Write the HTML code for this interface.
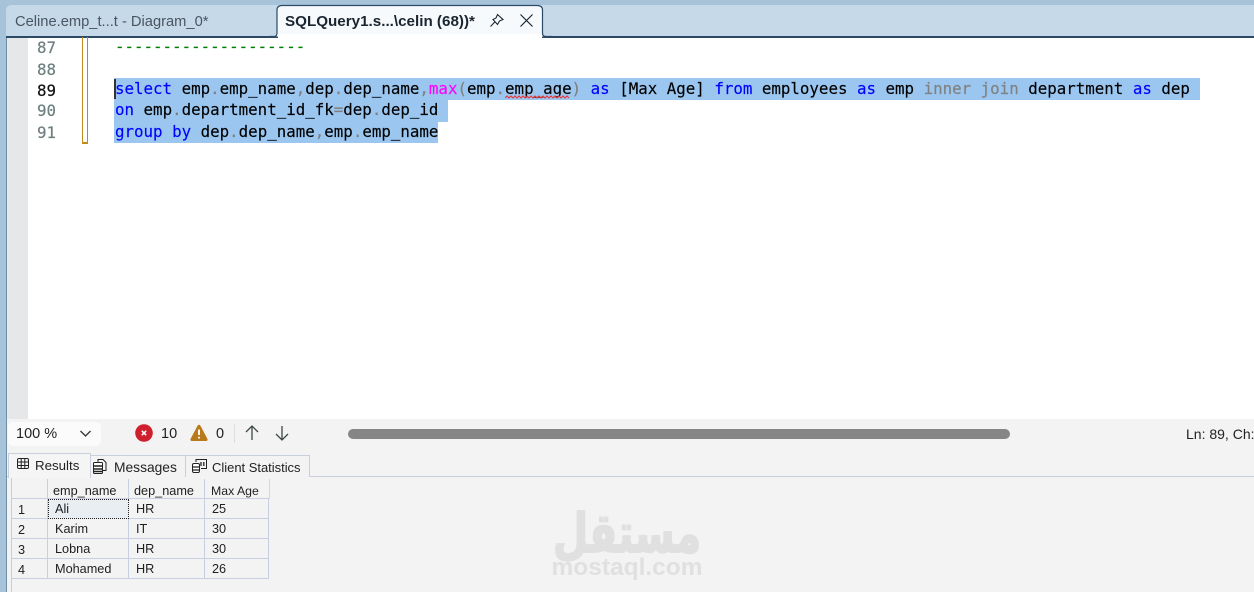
<!DOCTYPE html>
<html><head><meta charset="utf-8">
<style>
html,body{margin:0;padding:0}
body{width:1254px;height:592px;overflow:hidden;position:relative;background:#a6c3d9;font-family:"Liberation Sans",sans-serif}
.a{position:absolute;white-space:pre}
.code{font-family:"DejaVu Sans Mono","Liberation Mono",monospace;font-size:15.8px;line-height:21px;color:#000;height:21px;-webkit-text-stroke:.15px}
.ln{font-family:"DejaVu Sans Mono",monospace;font-size:15.8px;color:#6e7f80;line-height:21px;-webkit-text-stroke:.2px}
.k{color:#0000ff}.g{color:#808080}.m{color:#ff00ff}
.sel{background:#9ac6ef;position:absolute}
.cell{position:absolute;font-size:12.7px;color:#1f1f1f;line-height:20px;white-space:pre}
.v{position:absolute;background:#c9cfe0}
</style></head><body>
<!-- tab strip -->
<div class="a" style="left:6px;top:5px;width:1248px;height:32px;background:#c6d9e8;border-radius:5px 0 0 0"></div>
<div class="a" style="left:15px;top:13px;font-size:14.7px;color:#4a5560;line-height:18px">Celine.emp_t...t - Diagram_0*</div>
<div class="a" style="left:6px;top:36px;width:1248px;height:2px;background:#2b4a66"></div>
<svg class="a" style="left:270px;top:0" width="282" height="40">
<path d="M0 36.5 H4 Q7 36.5 7 33 V10 Q7 5.5 12 5.5 H267 Q272.500 5.500 272.500 10 V33 Q272.500 36.500 276 36.500 H282" fill="#f7fafd" stroke="#2b4a66" stroke-width="1.200"/>
<rect x="8" y="34" width="264" height="5" fill="#ffffff"/>
</svg>
<div class="a" style="left:285px;top:13px;font-size:15.2px;font-weight:bold;color:#1a2530;line-height:18px">SQLQuery1.s...\celin (68))*</div>
<svg class="a" style="left:488px;top:12px" width="18" height="18" fill="none" stroke="#1a2530" stroke-width="1.100"><path d="M9.500 2.500 L15 7.500 L11.500 9 L9.500 12.500 L5 7.500 L8 6 Z M6.800 10 L2.500 14.500"/></svg>
<svg class="a" style="left:518px;top:12px" width="18" height="18" fill="none" stroke="#1a2530" stroke-width="1.200"><path d="M2.500 2.500 L14.500 14.500 M14.500 2.500 L2.500 14.500"/></svg>

<!-- editor -->
<div class="a" style="left:6px;top:38px;width:1248px;height:382px;background:#ffffff"></div>
<div class="a" style="left:6px;top:38px;width:22px;height:382px;background:#e6e7e8"></div>
<div class="a" style="left:6px;top:38px;width:1px;height:554px;background:#6f8ea8"></div>
<div class="a" style="left:82px;top:37px;width:1px;height:106px;background:#c08a1e"></div>
<div class="a" style="left:87px;top:37px;width:1px;height:106px;background:#c08a1e"></div>
<div class="a" style="left:82px;top:142px;width:6px;height:2px;background:#c08a1e"></div>

<div class="a ln" style="left:37px;top:37px">87</div>
<div class="a ln" style="left:37px;top:59px">88</div>
<div class="a ln" style="left:37px;top:80px;color:#111">89</div>
<div class="a ln" style="left:37px;top:100px">90</div>
<div class="a ln" style="left:37px;top:122px">91</div>

<div class="sel" style="left:114px;top:78px;width:1086px;height:22px"></div>
<div class="sel" style="left:114px;top:100px;height:22px;width:334px"></div>
<div class="sel" style="left:114px;top:122px;width:324px;height:21px"></div>
<div class="a" style="left:114px;top:79px;width:1.500px;height:20px;background:#333"></div>

<div class="a code" style="left:115px;top:36px;color:#008000">--------------------</div>
<div class="a code" style="left:115px;top:78px"><span class="k">select</span> emp<span class="g">.</span>emp_name<span class="g">,</span>dep<span class="g">.</span>dep_name<span class="g">,</span><span class="m">max</span><span class="g">(</span>emp<span class="g">.</span>emp_age<span class="g">)</span> <span class="k">as</span> [Max Age] <span class="k">from</span> employees <span class="k">as</span> emp <span class="g">inner</span> <span class="g">join</span> department <span class="k">as</span> dep</div>
<div class="a code" style="left:115px;top:99px"><span class="k">on</span> emp<span class="g">.</span>department_id_fk<span class="g">=</span>dep<span class="g">.</span>dep_id</div>
<div class="a code" style="left:115px;top:121px"><span class="k">group</span> <span class="k">by</span> dep<span class="g">.</span>dep_name<span class="g">,</span>emp<span class="g">.</span>emp_name</div>
<svg class="a" style="left:505px;top:95px" width="70" height="5" fill="none" stroke="#e33" stroke-width="1"><path d="M0 3 l2-2 2 2 2-2 2 2 2-2 2 2 2-2 2 2 2-2 2 2 2-2 2 2 2-2 2 2 2-2 2 2 2-2 2 2 2-2 2 2 2-2 2 2 2-2 2 2 2-2 2 2 2-2 2 2 2-2 2 2 2-2 2 2"/></svg>

<!-- status bar -->
<div class="a" style="left:7px;top:419px;width:1247px;height:33px;background:#f3f3f3"></div>
<div class="a" style="left:8px;top:422px;width:93px;height:24px;background:#fbfbfb;border-radius:5px"></div>
<div class="a" style="left:16px;top:425px;font-size:14.500px;color:#222;line-height:18px">100 %</div>
<svg class="a" style="left:79px;top:429px" width="13" height="9" fill="none" stroke="#333" stroke-width="1.300"><path d="M1.500 2 L6.500 7 L11.500 2"/></svg>
<svg class="a" style="left:135px;top:424px" width="18" height="18"><circle cx="9" cy="9" r="8.800" fill="#cf1f2e"/><path d="M6.800 6.800 L11.200 11.200 M11.200 6.800 L6.800 11.200" stroke="#fff" stroke-width="1.500"/></svg>
<div class="a" style="left:161px;top:425px;font-size:14.500px;color:#222;line-height:18px">10</div>
<svg class="a" style="left:190px;top:424px" width="18" height="18"><path d="M9 .8 Q10 .8 10.600 2 L17.500 15 Q18 17 16 17 H2 Q0 17 .5 15 L7.400 2 Q8 .8 9 .8Z" fill="#b8791a"/><path d="M9 5.500 V11 M9 12.800 V14.500" stroke="#fff" stroke-width="1.800"/></svg>
<div class="a" style="left:216px;top:425px;font-size:14.500px;color:#222;line-height:18px">0</div>
<div class="a" style="left:234px;top:424px;width:1px;height:19px;background:#ddd"></div>
<svg class="a" style="left:244px;top:424px" width="16" height="18" fill="none" stroke="#3c4a48" stroke-width="1.300"><path d="M8 2 V16 M2 8 L8 2 L14 8"/></svg>
<svg class="a" style="left:274px;top:424px" width="16" height="18" fill="none" stroke="#3c4a48" stroke-width="1.300"><path d="M8 2 V16 M2 10 L8 16 L14 10"/></svg>
<div class="a" style="left:348px;top:429px;width:662px;height:10px;background:#868686;border-radius:5px"></div>
<div class="a" style="left:1186px;top:425px;font-size:14px;color:#222;line-height:18px">Ln: 89, Ch:</div>

<!-- results panel -->
<div class="a" style="left:7px;top:452px;width:1247px;height:140px;background:#f3f3f3"></div>
<div class="a" style="left:7px;top:476px;width:1247px;height:1px;background:#c9cfdc"></div>
<div class="a" style="left:90px;top:455px;width:96px;height:21px;background:#f3f3f3;border:1px solid #c9cfdc;border-bottom:0;box-sizing:content-box"></div>
<div class="a" style="left:185px;top:455px;width:123px;height:21px;background:#f3f3f3;border:1px solid #c9cfdc;border-bottom:0"></div>
<div class="a" style="left:8px;top:453px;width:81px;height:24px;background:#f5f5f5;border:1px solid #c9cfdc;border-bottom:0"></div>
<svg class="a" style="left:16px;top:457px" width="14" height="13" fill="none" stroke="#222" stroke-width="1"><rect x="1.500" y="1.500" width="11" height="10" rx="1.500"/><path d="M1.500 5 H12.500 M1.500 8.500 H12.500 M5.200 1.500 V11.500 M8.800 1.500 V11.500"/></svg>
<div class="a" style="left:35px;top:458px;font-size:13.300px;color:#222;line-height:16px">Results</div>
<svg class="a" style="left:92px;top:458px" width="16" height="17" fill="none" stroke="#222" stroke-width="1"><path d="M6 4 V1.500 H11 L14 4.500 V12.500 H11"/><rect x="1.500" y="4.500" width="9" height="11" fill="#fff" rx="1"/><path d="M1.500 8 H10.500 M1.500 11 H10.500 M1.500 13.500 H10.500" stroke-width="1.500"/></svg>
<div class="a" style="left:114px;top:460px;font-size:13.800px;color:#222;line-height:16px">Messages</div>
<svg class="a" style="left:191px;top:458px" width="17" height="16" fill="none" stroke="#222" stroke-width="1"><path d="M5 4 V1.500 H15.500 V10.500 H10"/><rect x="1.500" y="5.500" width="7" height="9" rx="1.500" fill="#fff"/><path d="M1.500 9 H8.500 M1.500 12 H8.500 M10 4 V8 M12.800 4 V8" stroke-width="1.300"/></svg>
<div class="a" style="left:212px;top:460px;font-size:13px;letter-spacing:-.02px;color:#222;line-height:16px">Client Statistics</div>

<!-- grid -->
<div class="a" style="left:11px;top:478px;width:1px;height:114px;background:#c9cfdc"></div>
<div class="a" style="left:12px;top:479px;width:257px;height:20px;background:#f3f3f3;border-right:1px solid #d3d7e3"></div>
<div class="v" style="left:12px;top:498px;width:257px;height:1px"></div>
<div class="v" style="left:12px;top:518px;width:257px;height:1px"></div>
<div class="v" style="left:12px;top:538px;width:257px;height:1px"></div>
<div class="v" style="left:12px;top:558px;width:257px;height:1px"></div>
<div class="v" style="left:12px;top:578px;width:257px;height:1px"></div>
<div class="v" style="left:47px;top:479px;width:1px;height:99px"></div>
<div class="v" style="left:128px;top:479px;width:1px;height:99px"></div>
<div class="v" style="left:204px;top:479px;width:1px;height:99px"></div>
<div class="v" style="left:268px;top:498px;width:1px;height:81px"></div>
<div class="a" style="left:48px;top:499px;width:79px;height:18px;background:#e9eef2;border:1px dotted #222"></div>
<div class="cell" style="left:53px;top:481px">emp_name</div><div class="cell" style="left:134px;top:481px">dep_name</div><div class="cell" style="left:211px;top:481px;font-size:12.300px">Max Age</div>
<div class="cell" style="left:18px;top:500px">1</div><div class="cell" style="left:55px;top:499px">Ali</div><div class="cell" style="left:136px;top:499px">HR</div><div class="cell" style="left:212px;top:499px">25</div>
<div class="cell" style="left:18px;top:520px">2</div><div class="cell" style="left:55px;top:519px">Karim</div><div class="cell" style="left:136px;top:519px">IT</div><div class="cell" style="left:212px;top:519px">30</div>
<div class="cell" style="left:18px;top:540px">3</div><div class="cell" style="left:55px;top:539px">Lobna</div><div class="cell" style="left:136px;top:539px">HR</div><div class="cell" style="left:212px;top:539px">30</div>
<div class="cell" style="left:18px;top:560px">4</div><div class="cell" style="left:55px;top:559px">Mohamed</div><div class="cell" style="left:136px;top:559px">HR</div><div class="cell" style="left:212px;top:559px">26</div>

<!-- watermark -->
<svg class="a" style="left:540px;top:500px" width="175" height="92">
<text x="87" y="52" text-anchor="middle" font-family="DejaVu Sans,sans-serif" font-weight="bold" font-size="54" fill="#e0e0e0" stroke="#e0e0e0" stroke-width="2" stroke-linejoin="round" textLength="148" lengthAdjust="spacingAndGlyphs" direction="rtl">مستقل</text>
<text x="87" y="75" text-anchor="middle" font-family="Liberation Sans,sans-serif" font-weight="bold" font-size="24.500" fill="#e0e0e0">mostaql.com</text>
</svg>
</body></html>
